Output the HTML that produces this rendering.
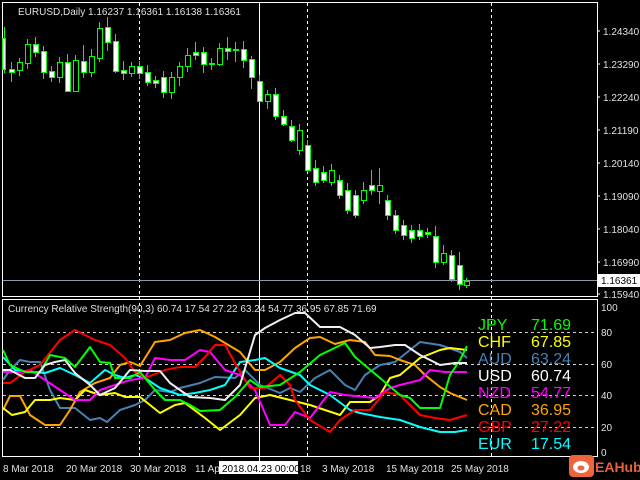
<!DOCTYPE html>
<html><head><meta charset="utf-8"><style>
body{margin:0;background:#000;width:640px;height:480px;overflow:hidden;font-family:"Liberation Sans",sans-serif}
svg{position:absolute;left:0;top:0}
</style></head><body>
<svg width="640" height="480" viewBox="0 0 640 480" font-family="Liberation Sans, sans-serif">
<rect width="640" height="480" fill="#000"/>
<!-- frames -->
<rect x="2.5" y="2.5" width="595" height="294" fill="none" stroke="#fff"/>
<rect x="2.5" y="299.5" width="595" height="157" fill="none" stroke="#fff"/>
<!-- vertical grid dashed -->
<g stroke="#fff" stroke-dasharray="3,3">
<line x1="139.5" y1="3" x2="139.5" y2="456"/>
<line x1="307.5" y1="3" x2="307.5" y2="456"/>
<line x1="491.5" y1="3" x2="491.5" y2="456"/>
</g>
<line x1="259.5" y1="3" x2="259.5" y2="462" stroke="#fff"/>
<!-- indicator horizontal dashed -->
<g stroke="#ccc" stroke-dasharray="3,3">
<line x1="3" y1="332.5" x2="597" y2="332.5"/>
<line x1="3" y1="364.5" x2="597" y2="364.5"/>
<line x1="3" y1="395.5" x2="597" y2="395.5"/>
<line x1="3" y1="427.5" x2="597" y2="427.5"/>
</g>
<line x1="3" y1="280.5" x2="597" y2="280.5" stroke="#8a9aa8"/>
<!-- candles -->
<g stroke="#00ff00" stroke-width="1">
<path d="M4.5 27V73 M11.5 62V82 M19.5 58V76 M27.5 39V69 M35.5 37V57 M43.5 46V79 M51.5 66V82 M59.5 57V83 M67.5 54V92 M75.5 55V92 M83.5 45V78 M91.5 49V77 M99.5 22V62 M107.5 17V51 M115.5 34V73 M123.5 61V80 M131.5 62V77 M139.5 61V79 M147.5 65V86 M155.5 76V88 M163.5 71V98 M171.5 72V99 M179.5 62V86 M187.5 48V72 M195.5 42V60 M203.5 47V73 M211.5 58V70 M219.5 43V66 M227.5 37V60 M235.5 42V62 M243.5 41V68 M251.5 56V89 M259.5 75V102 M267.5 90V109 M275.5 88V120 M283.5 110V126 M291.5 120V142 M299.5 124V155 M307.5 140V172 M315.5 160V186 M323.5 166V183 M331.5 164V186 M339.5 175V199 M347.5 183V214 M355.5 190V218 M363.5 182V204 M371.5 170V195 M379.5 168V204 M387.5 195V220 M395.5 210V234 M403.5 220V240 M411.5 225V243 M419.5 224V240 M427.5 228V238 M435.5 226V268 M443.5 245V265 M451.5 250V282 M459.5 252V290 M466.5 278V288"/>
<g fill="#fff">
<rect x="2.5" y="38.5" width="3" height="31"/><rect x="9.5" y="69.5" width="5" height="3"/><rect x="33.5" y="44.5" width="5" height="8"/><rect x="41.5" y="51.5" width="5" height="21"/><rect x="49.5" y="71.5" width="5" height="6"/><rect x="65.5" y="62.5" width="5" height="29"/><rect x="81.5" y="61.5" width="5" height="11"/><rect x="105.5" y="27.5" width="5" height="15"/><rect x="113.5" y="41.5" width="5" height="30"/><rect x="121.5" y="70.5" width="5" height="3"/><rect x="137.5" y="66.5" width="5" height="7"/><rect x="145.5" y="72.5" width="5" height="10"/><rect x="153.5" y="80.5" width="5" height="3"/><rect x="161.5" y="77.5" width="5" height="15"/><rect x="193.5" y="52.5" width="5" height="3"/><rect x="201.5" y="52.5" width="5" height="12"/><rect x="225.5" y="48.5" width="5" height="3"/><rect x="233.5" y="49.5" width="5" height="1"/><rect x="241.5" y="49.5" width="5" height="11"/><rect x="249.5" y="59.5" width="5" height="18"/><rect x="257.5" y="81.5" width="5" height="20"/><rect x="273.5" y="94.5" width="5" height="22"/><rect x="281.5" y="116.5" width="5" height="8"/><rect x="289.5" y="126.5" width="5" height="14"/><rect x="305.5" y="145.5" width="5" height="25"/><rect x="313.5" y="168.5" width="5" height="14"/><rect x="321.5" y="172.5" width="5" height="8"/><rect x="337.5" y="180.5" width="5" height="15"/><rect x="345.5" y="190.5" width="5" height="20"/><rect x="353.5" y="195.5" width="5" height="20"/><rect x="369.5" y="185.5" width="5" height="5"/><rect x="385.5" y="200.5" width="5" height="15"/><rect x="393.5" y="215.5" width="5" height="15"/><rect x="401.5" y="225.5" width="5" height="10"/><rect x="409.5" y="230.5" width="5" height="8"/><rect x="417.5" y="230.5" width="5" height="6"/><rect x="425.5" y="232.5" width="5" height="2"/><rect x="433.5" y="236.5" width="5" height="26"/><rect x="449.5" y="255.5" width="5" height="24"/><rect x="457.5" y="265.5" width="5" height="19"/>
</g>
<g fill="#000">
<rect x="17.5" y="62.5" width="5" height="8"/><rect x="25.5" y="44.5" width="5" height="19"/><rect x="57.5" y="62.5" width="5" height="15"/><rect x="73.5" y="60.5" width="5" height="31"/><rect x="89.5" y="56.5" width="5" height="16"/><rect x="97.5" y="28.5" width="5" height="30"/><rect x="129.5" y="66.5" width="5" height="7"/><rect x="169.5" y="77.5" width="5" height="15"/><rect x="177.5" y="66.5" width="5" height="11"/><rect x="185.5" y="55.5" width="5" height="11"/><rect x="209.5" y="63.5" width="5" height="1"/><rect x="217.5" y="48.5" width="5" height="16"/><rect x="265.5" y="94.5" width="5" height="7"/><rect x="297.5" y="130.5" width="5" height="20"/><rect x="329.5" y="170.5" width="5" height="12"/><rect x="361.5" y="190.5" width="5" height="10"/><rect x="377.5" y="185.5" width="5" height="6"/><rect x="441.5" y="253.5" width="5" height="9"/><rect x="464.5" y="281.5" width="5" height="4"/>
</g>
</g>
<!-- indicator lines -->
<g fill="none" stroke-width="2" stroke-linejoin="round">
<polyline stroke="#4682b4" points="3,380 10,370 20,360 30,362 40,362 50,390 60,408 75,408 90,420 100,418 107,422 120,410 135,405 145,400 155,390 170,392 180,388 200,383 215,377 235,378 245,370 260,385 280,393 290,388 300,392 315,378 330,370 345,385 355,390 365,375 380,365 395,362 420,342 440,345 460,352 467,358"/>
<polyline stroke="#ffa500" points="3,410 10,396 20,396 30,415 45,425 60,425 70,410 80,392 95,383 110,378 120,365 130,362 140,366 155,342 170,340 185,333 200,330 215,337 225,343 240,352 255,370 265,370 280,362 295,348 310,338 320,337 335,344 350,340 365,342 375,355 390,356 400,360 415,365 425,375 440,387 450,393 467,400"/>
<polyline stroke="#ffff00" points="3,408 12,415 25,412 35,400 50,400 60,398 75,400 85,390 100,395 115,393 125,397 140,397 160,413 175,405 185,403 205,418 220,430 240,415 255,398 270,395 290,400 310,405 340,415 350,402 370,402 380,395 390,378 400,375 420,358 440,350 450,348 467,350"/>
<polyline stroke="#00ffff" points="3,357 15,370 30,372 45,373 60,368 75,375 90,383 105,370 115,375 125,378 135,375 145,378 160,388 180,395 195,393 210,390 225,385 240,362 255,360 265,358 280,368 300,375 310,385 330,395 350,410 360,413 380,417 400,420 420,427 440,432 455,432 467,430"/>
<polyline stroke="#ff00ff" points="3,372 20,372 30,370 45,380 60,390 75,400 90,400 100,390 115,385 130,380 145,378 155,358 170,360 185,360 200,350 210,352 225,370 240,375 255,390 270,425 285,425 295,412 310,418 330,392 345,395 375,398 390,388 400,385 420,380 430,370 445,372 467,372"/>
<polyline stroke="#ff0000" points="3,383 10,383 25,372 40,365 60,340 75,330 95,340 110,345 125,358 135,372 145,378 165,370 180,367 195,367 205,357 215,345 225,345 235,363 250,388 265,388 280,375 290,385 295,400 310,420 330,432 340,420 355,410 370,410 385,392 400,395 410,405 420,415 435,418 450,420 467,415"/>
<polyline stroke="#00ff00" points="3,350 10,365 25,372 40,372 50,355 65,358 75,367 90,347 100,362 110,363 115,378 130,378 140,372 155,390 165,400 180,400 190,405 200,411 220,410 235,397 250,380 260,387 280,385 300,372 320,355 345,343 355,357 380,378 400,395 410,398 420,408 440,408 450,375 460,360 467,346"/>
<polyline stroke="#f0f0f0" points="3,370 10,370 25,378 35,378 45,365 55,362 65,360 75,373 90,385 100,395 115,388 130,370 145,371 160,371 170,383 190,397 210,398 225,400 240,385 255,335 265,328 280,320 295,313 305,313 320,327 340,327 355,335 370,348 380,347 395,345 405,345 420,355 440,365 455,363 467,363"/>
</g>
<!-- text -->
<text x="18" y="15" font-size="10" fill="#e0e0e0">EURUSD,Daily  1.16237 1.16361 1.16138 1.16361</text>
<text x="8" y="312" font-size="10" fill="#e0e0e0">Currency Relative Strength(90,3) 60.74 17.54 27.22 63.24 54.77 36.95 67.85 71.69</text>
<g font-size="16">
<text x="478" y="330" fill="#00ff00">JPY</text><text x="531" y="330" fill="#00ff00">71.69</text>
<text x="478" y="347" fill="#ffff00">CHF</text><text x="531" y="347" fill="#ffff00">67.85</text>
<text x="478" y="364" fill="#4682b4">AUD</text><text x="531" y="364" fill="#4682b4">63.24</text>
<text x="478" y="381" fill="#fff">USD</text><text x="531" y="381" fill="#fff">60.74</text>
<text x="478" y="398" fill="#ff00ff">NZD</text><text x="531" y="398" fill="#ff00ff">54.77</text>
<text x="478" y="415" fill="#ffa500">CAD</text><text x="531" y="415" fill="#ffa500">36.95</text>
<text x="478" y="432" fill="#ff0000">GBP</text><text x="531" y="432" fill="#ff0000">27.22</text>
<text x="478" y="449" fill="#00ffff">EUR</text><text x="531" y="449" fill="#00ffff">17.54</text>
</g>
<g font-size="10" fill="#e0e0e0">
<text x="603" y="35">1.24340</text><text x="603" y="68">1.23290</text><text x="603" y="101">1.22240</text><text x="603" y="134">1.21190</text><text x="603" y="167">1.20140</text><text x="603" y="200">1.19090</text><text x="603" y="233">1.18040</text><text x="603" y="266">1.16990</text><text x="603" y="298">1.15940</text>
<text x="601" y="311">100</text><text x="601" y="336">80</text><text x="601" y="368">60</text><text x="601" y="399">40</text><text x="601" y="431">20</text><text x="601" y="456">0</text>
<text x="3" y="472">8 Mar 2018</text><text x="66" y="472">20 Mar 2018</text><text x="130" y="472">30 Mar 2018</text><text x="195" y="472">11 Ap</text><text x="300" y="472">18</text><text x="322" y="472">3 May 2018</text><text x="386" y="472">15 May 2018</text><text x="451" y="472">25 May 2018</text>
</g>
<rect x="598" y="274" width="42" height="13" fill="#fff"/>
<text x="601" y="284" font-size="10" fill="#000">1.16361</text>
<rect x="219" y="461" width="79" height="13" fill="#fff"/>
<text x="222" y="472" font-size="10" fill="#000">2018.04.23 00:00</text>
<g stroke="#fff"><line x1="597" y1="31" x2="600" y2="31"/><line x1="597" y1="64" x2="600" y2="64"/><line x1="597" y1="97" x2="600" y2="97"/><line x1="597" y1="130" x2="600" y2="130"/><line x1="597" y1="163" x2="600" y2="163"/><line x1="597" y1="196" x2="600" y2="196"/><line x1="597" y1="229" x2="600" y2="229"/><line x1="597" y1="262" x2="600" y2="262"/><line x1="597" y1="294" x2="600" y2="294"/></g>
<!-- logo -->
<rect x="569" y="455" width="25" height="22" rx="4" fill="#f0643c"/>
<ellipse cx="581" cy="467" rx="8" ry="6" fill="#fff"/>
<ellipse cx="581" cy="468" rx="3.5" ry="2.5" fill="#f0643c"/>
<text x="595" y="472" font-size="14" font-weight="bold" fill="#e8603c">EAHub</text>
</svg>
</body></html>
